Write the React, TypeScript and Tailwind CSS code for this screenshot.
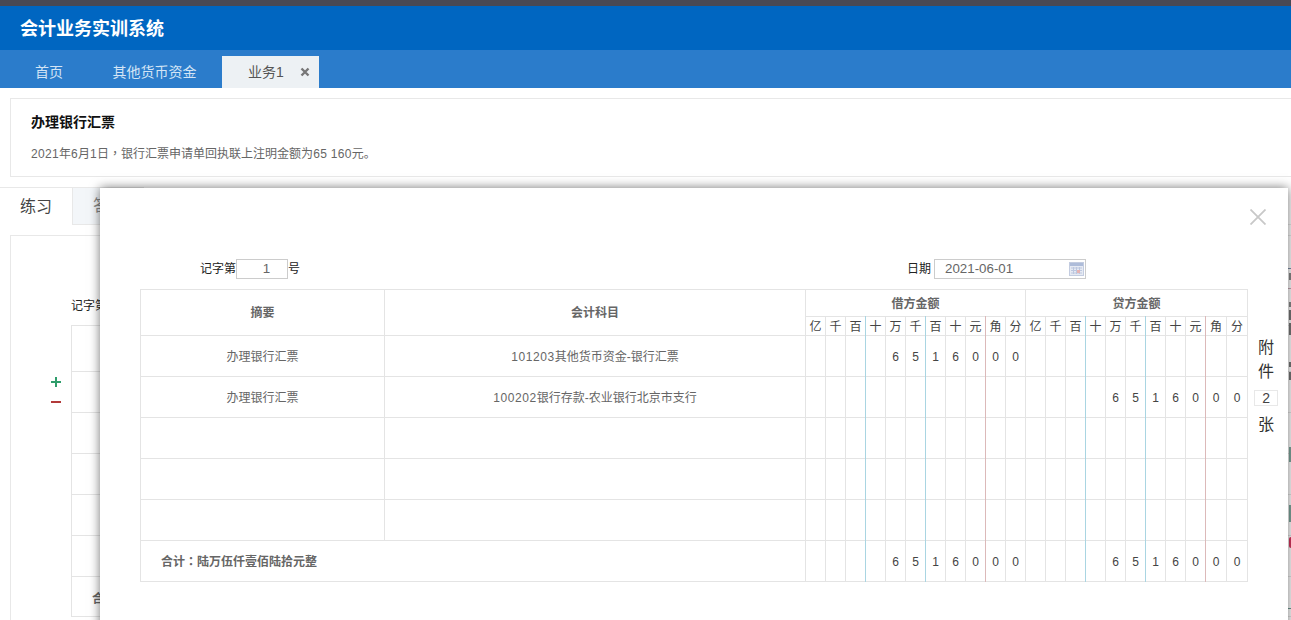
const FONT = "font-['Liberation_Sans','Noto_Sans_CJK_SC',sans-serif]";
const UNITS = ["亿", "千", "百", "十", "万", "千", "百", "十", "元", "角", "分"];
const DIGITS = ["", "", "", "", "6", "5", "1", "6", "0", "0", "0"];
const EMPTY = Array(11).fill("");

function Num({ children }: { children: string }) {
  return <span className="tracking-[0.33px]">{children}</span>;
}

function Punct({ children }: { children: string }) {
  return <span className="font-['Noto_Sans_CJK_TC',sans-serif]">{children}</span>;
}

function Cells({ values }: { values: string[] }) {
  return (
    <>
      {values.map((v, i) => (
        <td
          key={i}
          className="relative border border-[#e4e4e4] p-0 pt-[2px] text-center text-[12px] leading-[16px] text-[#444]"
        >
          {v}
          {(i === 2 || i === 5) && <span className="absolute -bottom-px -right-px -top-px w-px bg-[#a9d5e2]" />}
          {i === 8 && <span className="absolute -bottom-px -right-px -top-px w-px bg-[#dcb9b9]" />}
        </td>
      ))}
    </>
  );
}

function VoucherTable() {
  const rows = [
    { a: "办理银行汇票", code: "101203", b: "其他货币资金-银行汇票", d: DIGITS, c: EMPTY },
    { a: "办理银行汇票", code: "100202", b: "银行存款-农业银行北京市支行", d: EMPTY, c: DIGITS },
    { a: "", code: "", b: "", d: EMPTY, c: EMPTY },
    { a: "", code: "", b: "", d: EMPTY, c: EMPTY },
    { a: "", code: "", b: "", d: EMPTY, c: EMPTY },
  ];
  return (
    <table className="w-[1107px] table-fixed border-collapse text-[12px] text-[#666]">
      <colgroup>
        <col className="w-[244px]" />
        <col className="w-[421px]" />
        {Array.from({ length: 20 }).map((_, i) => (
          <col key={i} className="w-[20px]" />
        ))}
        <col className="w-[21px]" />
        <col className="w-[21px]" />
      </colgroup>
      <tbody>
        <tr className="h-[27px]">
          <td rowSpan={2} className="border border-[#e4e4e4] text-center font-bold">摘要</td>
          <td rowSpan={2} className="border border-[#e4e4e4] text-center font-bold">会计科目</td>
          <td colSpan={11} className="border border-[#e4e4e4] pt-[2px] text-center font-bold leading-[16px]">借方金额</td>
          <td colSpan={11} className="border border-[#e4e4e4] pt-[2px] text-center font-bold leading-[16px]">贷方金额</td>
        </tr>
        <tr className="h-[19px]">
          <Cells values={UNITS} />
          <Cells values={UNITS} />
        </tr>
        {rows.map((r, i) => (
          <tr key={i} className="h-[41px]">
            <td className="border border-[#e4e4e4] pt-[2px] text-center">{r.a}</td>
            <td className="border border-[#e4e4e4] pt-[2px] text-center">
              <span className="tracking-[0.6px]">{r.code}</span>
              {r.b}
            </td>
            <Cells values={r.d} />
            <Cells values={r.c} />
          </tr>
        ))}
        <tr className="h-[41px]">
          <td colSpan={2} className="border border-[#e4e4e4] pl-[20px] font-bold">
            合计<Punct>：</Punct>陆万伍仟壹佰陆拾元整
          </td>
          <Cells values={DIGITS} />
          <Cells values={DIGITS} />
        </tr>
      </tbody>
    </table>
  );
}

function CalendarIcon() {
  return (
    <svg width="15" height="14" viewBox="0 0 15 14" className="shrink-0">
      <rect x="0.5" y="0.5" width="14" height="13" fill="#e6eaf3" stroke="#c3cce0" />
      <rect x="1" y="1" width="13" height="3" fill="#aebcd9" />
      <path d="M2 6h11M2 8.5h11M2 11h11M4.5 5v7M7.5 5v7M10.5 5v7" stroke="#bcc7df" strokeWidth="1" />
      <rect x="8" y="8" width="3" height="3" fill="#e5b3b3" />
    </svg>
  );
}

function BackgroundBody() {
  const heights = ["h-[46px]", "h-[41px]", "h-[41px]", "h-[41px]", "h-[41px]", "h-[41px]", "h-[41px]"];
  return (
    <div className="ml-[10px] mt-[10px] flex border border-r-0 border-[#e8e8e8] pb-[4px] pt-[61px]">
      <div className="flex w-[60px] shrink-0 flex-col items-end pr-[10px] pt-[80px]">
        <svg width="10" height="10" viewBox="0 0 10 10">
          <path d="M5 0v10M0 5h10" stroke="#2f9d6b" strokeWidth="2" />
        </svg>
        <svg width="10" height="10" viewBox="0 0 10 10" className="mt-[10px]">
          <path d="M0 5h10" stroke="#b23a3a" strokeWidth="2" />
        </svg>
      </div>
      <div className="flex-1">
        <div className="h-[28px] text-[12px] leading-[18px] text-[#222]">记字第</div>
        <div className="border-l border-[#e4e4e4]">
          {heights.map((h, i) => (
            <div key={i} className={`${h} border-t border-[#e4e4e4] pl-[20px] text-[12px] font-bold text-[#666] ${i === 6 ? "border-b pt-[13px]" : ""}`}>
              {i === 6 ? "合计" : ""}
            </div>
          ))}
        </div>
      </div>
    </div>
  );
}

function EdgeFragments() {
  return (
    <>
      <div className="absolute right-0 top-[268px] h-[1px] w-[3px] bg-[#7f8fa8]" />
      <div className="absolute right-0 top-[273px] h-[7px] w-[2px] bg-[#8a8a8a]" />
      <div className="absolute right-0 top-[288px] h-[1px] w-[3px] bg-[#c9aab5]" />
      <div className="absolute right-0 top-[302px] h-[5px] w-[2px] bg-[#8a8a8a]" />
      <div className="absolute right-0 top-[310px] h-[10px] w-[2px] bg-[#777]" />
      <div className="absolute right-0 top-[323px] h-[12px] w-[2px] bg-[#777]" />
      <div className="absolute right-0 top-[362px] h-[5px] w-[2px] bg-[#777]" />
      <div className="absolute right-0 top-[372px] h-[8px] w-[2px] bg-[#777]" />
      <div className="absolute right-0 top-[447px] h-[15px] w-[2px] bg-[#7fa79d]" />
      <div className="absolute right-0 top-[505px] h-[17px] w-[2px] bg-[#7fa79d]" />
      <div className="absolute right-0 top-[537px] h-[11px] w-[2px] rounded-l-full bg-[#d8365f]" />
      <div className="absolute right-0 top-[608px] h-[1px] w-[3px] bg-[#6f9a90]" />
    </>
  );
}

export default function App() {
  return (
    <div className={`relative h-[620px] w-[1291px] overflow-hidden bg-white ${FONT}`}>
      <div className="h-[6px] bg-[#494954]" />
      <header className="flex h-[44px] items-center bg-[#0066c1] pl-[20px] pt-[2px] text-[18px] font-bold text-white">
        会计业务实训系统
      </header>
      <nav className="flex h-[38px] items-end bg-[#2b7ccb] text-[14px] text-[#d3e4f5]">
        <div className="flex h-[32px] w-[85px] items-center justify-center pl-[13px]">首页</div>
        <div className="flex h-[32px] w-[137px] items-center justify-center pl-[2px]">其他货币资金</div>
        <div className="flex h-[32px] w-[97px] items-center bg-[#edf1f4] pl-[26px] text-[#555]">
          <span>业务1</span>
          <svg width="10" height="10" viewBox="0 0 10 10" className="ml-[16px]">
            <path d="M1.5 1.5l7 7M8.5 1.5l-7 7" stroke="#777" strokeWidth="2.4" />
          </svg>
        </div>
      </nav>
      <section className="ml-[10px] mt-[10px] h-[79px] border border-r-0 border-[#e8e8e8] pl-[20px] pt-[14px]">
        <h1 className="text-[14px] font-bold leading-[18px] text-[#111]">办理银行汇票</h1>
        <p className="mt-[13px] text-[12px] leading-[18px] text-[#666]">
          <Num>2021</Num>年<Num>6</Num>月<Num>1</Num>日<Punct>，</Punct>银行汇票申请单回执联上注明金额为<Num>65 160</Num>元。
        </p>
      </section>
      <div className="mt-[10px] flex h-[38px] border-b border-[#e8e8e8] text-[16px]">
        <div className="-mb-px flex w-[72px] items-center border-t border-[#e8e8e8] bg-white pl-[20px] text-[#444]">练习</div>
        <div className="flex w-[72px] items-center border-l border-t border-[#e8e8e8] bg-[#f3f6f9] pl-[20px] text-[#888]">答案</div>
      </div>
      <BackgroundBody />
      <EdgeFragments />

      <div className="absolute left-[100px] top-[188px] h-[500px] w-[1188px] bg-white shadow-[0_0_10px_rgba(0,0,0,0.55)]">
        <div className="flex justify-end pr-[22px] pt-[21px]">
          <svg width="16" height="16" viewBox="0 0 16 16">
            <path d="M0.5 0.5l15 15M15.5 0.5l-15 15" stroke="#c8c8c8" strokeWidth="1.8" />
          </svg>
        </div>
        <div className="mt-[34px] flex h-[20px] items-center text-[12px] text-[#222]">
          <div className="flex items-center pl-[100px]">
            <span>记字第</span>
            <div className="flex h-[20px] w-[52px] items-center justify-center border border-[#ccc] pl-[9px] text-[13.33px] text-[#666]">1</div>
            <span>号</span>
          </div>
          <div className="ml-auto flex items-center pr-[202px]">
            <span>日期</span>
            <div className="ml-[3px] flex h-[20px] w-[152px] items-center justify-between border border-[#ccc] pl-[10px] pr-[1px] text-[13.33px] text-[#666]">
              <span>2021-06-01</span>
              <CalendarIcon />
            </div>
          </div>
        </div>
        <div className="mt-[10px] flex pl-[40px]">
          <VoucherTable />
          <div className="flex w-[36px] flex-col items-center pt-[47px] text-[16px] leading-[24px] text-[#333]">
            <span>附</span>
            <span>件</span>
            <div className="mb-[7px] mt-[6px] flex h-[16px] w-[24px] items-center justify-center border border-[#e8e8e8] text-[14px] leading-none text-[#444]">2</div>
            <span>张</span>
          </div>
        </div>
      </div>
    </div>
  );
}
